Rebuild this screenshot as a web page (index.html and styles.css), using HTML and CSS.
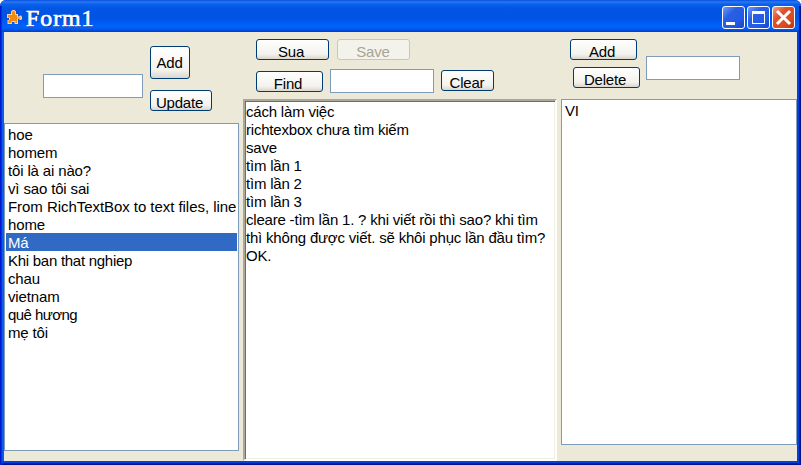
FILE: index.html
```html
<!DOCTYPE html>
<html lang="vi">
<head>
<meta charset="utf-8">
<title>Form1</title>
<link rel="stylesheet" href="styles.css">
</head>
<body>
<div class="window">
  <header class="titlebar">
    <svg class="app-icon" width="15" height="16" viewBox="0 0 15 16">
      <path d="M0 4h4V1.500L5.500 0h2L9 1.500V4h2v2.500h1l1-1h1l1 1.500v2l-1 1h-1l-1-1h-1V14H7.500v-2H5v2H.5v-4H2V8H0z" fill="#ffd3a0"/>
      <path d="M1 5h4V2l1-1h1l1 1v3h2v2.500h2.500l1-.5v2l-1-.5H10V13H8.500v-2h-4v2h-3v-3H3V7.500H1z" fill="#f58a13"/>
    </svg>
    <h1 class="title">Form1</h1>
    <div class="controls">
      <span class="control"><svg width="21" height="21" viewBox="0 0 21 21"><path d="M3 15h9v3H3z" fill="#fff"/></svg></span>
      <span class="control"><svg width="21" height="21" viewBox="0 0 21 21"><path d="M4 4h13v13H4zM5 7v9h11V7z" fill="#fff" fill-rule="evenodd"/></svg></span>
      <span class="control close"><svg width="21" height="21" viewBox="0 0 21 21"><path d="M4 4l13 13M17 4l-13 13" stroke="#fff" stroke-width="3"/></svg></span>
    </div>
  </header>
  <main class="client">
    <section class="column left">
      <div class="tools">
        <input class="field" aria-label="item">
        <div class="stack">
          <button class="btn tall">Add</button>
          <button class="btn update">Update</button>
        </div>
      </div>
      <ul class="list">
        <li>hoe</li><li>homem</li><li>tôi là ai nào?</li><li>vì sao tôi sai</li>
        <li class="long">From RichTextBox to text files, line</li><li>home</li>
        <li class="selected">Má</li><li class="tight">Khi ban that nghiep</li><li>chau</li>
        <li>vietnam</li><li class="tighter">quê hương</li><li>mẹ tôi</li>
      </ul>
    </section>
    <section class="column middle">
      <div class="tools">
        <div class="row first"><button class="btn wide">Sua</button><button class="btn wide" disabled>Save</button></div>
        <div class="row second"><button class="btn find">Find</button><input class="field" aria-label="find"><button class="btn clear">Clear</button></div>
      </div>
      <div class="richtext">
        <p>cách làm việc</p><p>richtexbox chưa tìm kiếm</p><p>save</p>
        <p>tìm lần 1</p><p>tìm lần 2</p><p>tìm lần 3</p>
        <p class="wrapped">cleare -tìm lần 1. ? khi viết rồi thì sao? khi tìm<br>thì không được viết. sẽ khôi phục lần đầu tìm?<br>OK.</p>
      </div>
    </section>
    <section class="column right">
      <div class="tools">
        <div class="stack"><button class="btn">Add</button><button class="btn delete">Delete</button></div>
        <input class="field" aria-label="language">
      </div>
      <ul class="list"><li>VI</li></ul>
    </section>
  </main>
</div>
</body>
</html>
```
FILE: styles.css
```css
* { box-sizing: border-box; }
body { margin: 0; background: #fff; overflow: hidden; font: 15px/18px "Liberation Sans", Arial, sans-serif; color: #000; }
h1, p, ul { margin: 0; padding: 0; }
ul { list-style: none; }
.window {
  width: 801px; height: 465px; display: flex; flex-direction: column;
  padding: 0 4px 4px; border-radius: 6px 6px 0 0; background: #0441d8;
  overflow: hidden; position: relative;
}
.window::after {
  content: ""; position: absolute; inset: 6px 0 0; pointer-events: none;
  box-shadow: inset 1px 0 #0019cf, inset 2px 0 #0831d9,
    inset -1px 0 #00138c, inset -2px 0 #001ea0, inset 0 -1px #00138c, inset 0 -2px #001ea0;
}
.titlebar {
  height: 32px; flex: none; margin: 0 -4px; padding: 0 6px 0 7px; display: flex; align-items: center;
  background: linear-gradient(#0a4fe0 0, #2878ee 2px, #0a62ef 4px, #0355e4 8px, #0053e3 18px, #005cf4 23px, #0062fa 27px, #005bf2 29px, #0046d5 31px, #003fcc 32px);
}
.app-icon { margin-top: 3px; }
.title { margin-left: 4px; padding-top: 3px; font: 24px/24px "Liberation Serif", serif; letter-spacing: .9px; color: #fff; text-shadow: 1px 1px #0a1883; -webkit-text-stroke: .7px #fff; }
.controls { margin-left: auto; padding-top: 3px; display: flex; gap: 2px; }
.control { width: 23px; height: 23px; border: 1px solid #fff; border-radius: 3px; background: linear-gradient(135deg, #6f9cf8, #295fe4 35%, #215be6 70%, #1646c4); }
.control svg { display: block; }
.control.close { background: linear-gradient(135deg, #f2a088, #e0502a 35%, #dc4a20 70%, #b93510); }
.client { flex: 1; display: flex; gap: 4px; background: #ece9d8; box-shadow: -2px 0 #0c5cec; }
.column { display: flex; flex-direction: column; }
.left { width: 235px; }
.middle { width: 314px; }
.right { width: 236px; }
.tools { flex: none; display: flex; }
.field { width: 104px; height: 24px; margin: 0; padding: 2px; border: 1px solid #7f9db9; background: #fff; }
.btn {
  width: 67px; height: 21px; margin: 0; padding: 3px 3px 0 0; border: 1px solid #003c74; border-radius: 3px;
  background: linear-gradient(#fff, #f3f2ed 75%, #dcd6cc); display: flex; justify-content: center;
  font: inherit; line-height: 18px; color: #000; overflow: hidden; letter-spacing: -.2px;
}
.btn:disabled { color: #a7a596; border-color: #c9c7ba; background: #f4f3eb; padding-right: 1px; }
.left .tools { height: 91px; padding: 14px 0 0 39px; gap: 7px; }
.left .field { width: 100px; margin-top: 28px; }
.stack { display: flex; flex-direction: column; }
.left .stack { gap: 11px; }
.btn.tall { width: 40px; height: 33px; padding: 7px 1px 0 0; }
.btn.update { width: 62px; }
.middle .tools { height: 67px; padding: 7px 0 0 13px; flex-direction: column; gap: 9px; }
.row { display: flex; }
.row.first { gap: 8px; }
.row.second { gap: 7px; }
.btn.wide { width: 73px; }
.btn.find { margin-top: 2px; }
.btn.clear { width: 53px; margin-top: 1px; padding-right: 1px; }
.right .tools { height: 67px; padding: 7px 0 0 9px; gap: 6px; }
.right .stack { gap: 7px; }
.btn.delete { margin-left: 3px; }
.right .field { width: 94px; margin-top: 17px; }
.list { background: #fff; border: 1px solid #7f9db9; padding: 1px; white-space: nowrap; overflow: hidden; letter-spacing: -.15px; }
.list li { height: 18px; padding: 1px 0 0 2px; }
.list .long { letter-spacing: -.05px; }
.list .tight { letter-spacing: -.27px; }
.list .tighter { letter-spacing: -.55px; }
.left .list { height: 328px; }
.right .list { height: 346px; }
.list .selected { background: #316ac5; color: #fff; }
.richtext { height: 362px; padding: 2px 0 0 1px; background: #fff; border: 2px solid; border-color: #aca899 #fff #fff #aca899; box-shadow: inset 1px 1px #716f64, inset -1px -1px #f1efe2; white-space: nowrap; letter-spacing: -.2px; }
```
